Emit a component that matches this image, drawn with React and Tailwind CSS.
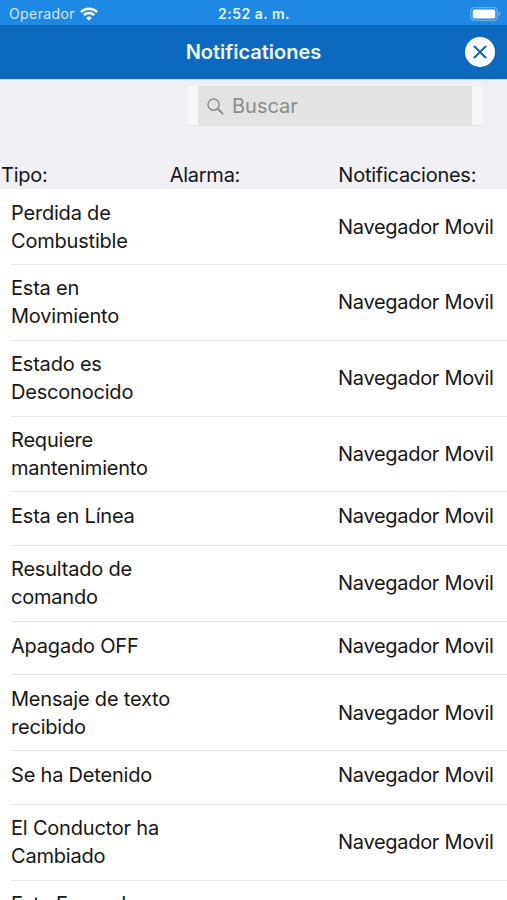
import React, { useState } from "react";

const alarms = [
  { type: ["Perdida de", "Combustible"], channel: "Navegador Movil" },
  { type: ["Esta en", "Movimiento"], channel: "Navegador Movil" },
  { type: ["Estado es", "Desconocido"], channel: "Navegador Movil" },
  { type: ["Requiere", "mantenimiento"], channel: "Navegador Movil" },
  { type: ["Esta en Línea"], channel: "Navegador Movil" },
  { type: ["Resultado de", "comando"], channel: "Navegador Movil" },
  { type: ["Apagado OFF"], channel: "Navegador Movil" },
  { type: ["Mensaje de texto", "recibido"], channel: "Navegador Movil" },
  { type: ["Se ha Detenido"], channel: "Navegador Movil" },
  { type: ["El Conductor ha", "Cambiado"], channel: "Navegador Movil" },
  { type: ["Esta Fuera de", "Línea"], channel: "Navegador Movil" },
];

const WifiIcon = () => (
  <svg className="w-[18px] h-[14px]" viewBox="0 0 18 14" fill="none" stroke="white" strokeWidth="2.4">
    <path d="M0.9 5.1a11.6 11.6 0 0 1 16.2 0" />
    <path d="M3.8 8.2a7.4 7.4 0 0 1 10.4 0" />
    <path d="M9 13.7 6.3 10.9a3.9 3.9 0 0 1 5.4 0Z" fill="white" stroke="none" />
  </svg>
);

const BatteryIcon = () => (
  <svg className="w-[31px] h-[14px]" viewBox="0 0 31 14">
    <rect x="0.7" y="0.7" width="26.6" height="12.6" rx="3.6" fill="none" stroke="#68b0ef" strokeWidth="1.3" />
    <rect x="2.7" y="2.5" width="22.6" height="9" rx="1.6" fill="white" />
    <path d="M28.6 4.8v4.4c1.3-.5 1.9-1.3 1.9-2.2s-.6-1.7-1.9-2.2Z" fill="#68b0ef" />
  </svg>
);

const StatusBar = () => (
  <div className="h-[25px] shrink-0 bg-[#1e88e5] grid grid-cols-3 items-center pl-[9px] pr-[6px] pt-[2px] text-white">
    <div className="flex items-center gap-[5px]">
      <span className="text-[14px] leading-none tracking-[0.4px] text-[#d6ebff]">Operador</span>
      <WifiIcon />
    </div>
    <span className="text-center text-[14px] leading-none font-semibold tracking-[0.5px] text-[#e6f3ff] pr-[2px]">2:52 a. m.</span>
    <div className="flex justify-end">
      <BatteryIcon />
    </div>
  </div>
);

const Header = () => (
  <div className="h-[54px] shrink-0 bg-[#0d69c0] grid grid-cols-[1fr_auto_1fr] items-center px-3">
    <h1 className="col-start-2 text-[20px] font-semibold text-[#eef7ff]">Notificationes</h1>
    <button aria-label="Cerrar" className="justify-self-end size-[30px] rounded-full bg-white flex items-center justify-center">
      <svg className="size-[14px]" viewBox="0 0 14 14" fill="none" stroke="#1565b0" strokeWidth="2.1" strokeLinecap="round">
        <path d="M1.5 1.5l11 11M12.5 1.5l-11 11" />
      </svg>
    </button>
  </div>
);

const SearchBar = ({ value, onChange }) => (
  <div className="ml-[188px] w-[294px] h-10 mt-[6px] px-[10px] bg-[#f7f7f8] border-b border-[#e3e3e5]">
    <label className="h-full w-[274px] flex items-center bg-[#e3e3e3] pl-[9px]">
      <svg className="size-[17px] shrink-0 mt-[2px]" viewBox="0 0 17 17" fill="none" stroke="#8b8b8d" strokeWidth="1.4">
        <circle cx="6.6" cy="6.6" r="5.6" />
        <path d="M10.7 10.7l5.4 5.4" strokeWidth="2" />
      </svg>
      <input
        className="ml-2 w-full min-w-0 bg-transparent text-[20px] text-black placeholder:text-[#8b8b8d] focus:outline-none"
        placeholder="Buscar"
        value={value}
        onChange={(e) => onChange(e.target.value)}
      />
    </label>
  </div>
);

const AlarmRow = ({ type, channel }) => (
  <li
    className={`ml-[11px] flex items-center justify-between border-b border-[#e4e4e5] pr-[14px] text-[20px] leading-[28px] tracking-[-0.3px] ${
      type.length > 1 ? "h-[75.8px]" : "h-[53.6px] pb-[5px]"
    }`}
  >
    <div className="tracking-[-0.2px]">
      {type.map((line) => (
        <div key={line}>{line}</div>
      ))}
    </div>
    <div className="w-[155px] whitespace-nowrap">{channel}</div>
  </li>
);

export default function App() {
  const [search, setSearch] = useState("");

  const visible = alarms.filter((alarm) =>
    alarm.type.join(" ").toLowerCase().includes(search.toLowerCase())
  );

  return (
    <div className="h-[900px] w-full overflow-hidden flex flex-col bg-white text-[#161616] font-['Inter',sans-serif]">
      <StatusBar />
      <Header />
      <div className="h-[110.3px] shrink-0 flex flex-col bg-[#efeff4] border-t border-[#c3def5]">
        <SearchBar value={search} onChange={setSearch} />
        <div className="mt-auto grid grid-cols-3 pl-[1px] text-[20px] leading-[28px] tracking-[-0.25px]">
          <span>Tipo:</span>
          <span>Alarma:</span>
          <span>Notificaciones:</span>
        </div>
      </div>
      <ul className="shrink-0">
        {visible.map((alarm) => (
          <AlarmRow key={alarm.type.join(" ")} {...alarm} />
        ))}
      </ul>
    </div>
  );
}
